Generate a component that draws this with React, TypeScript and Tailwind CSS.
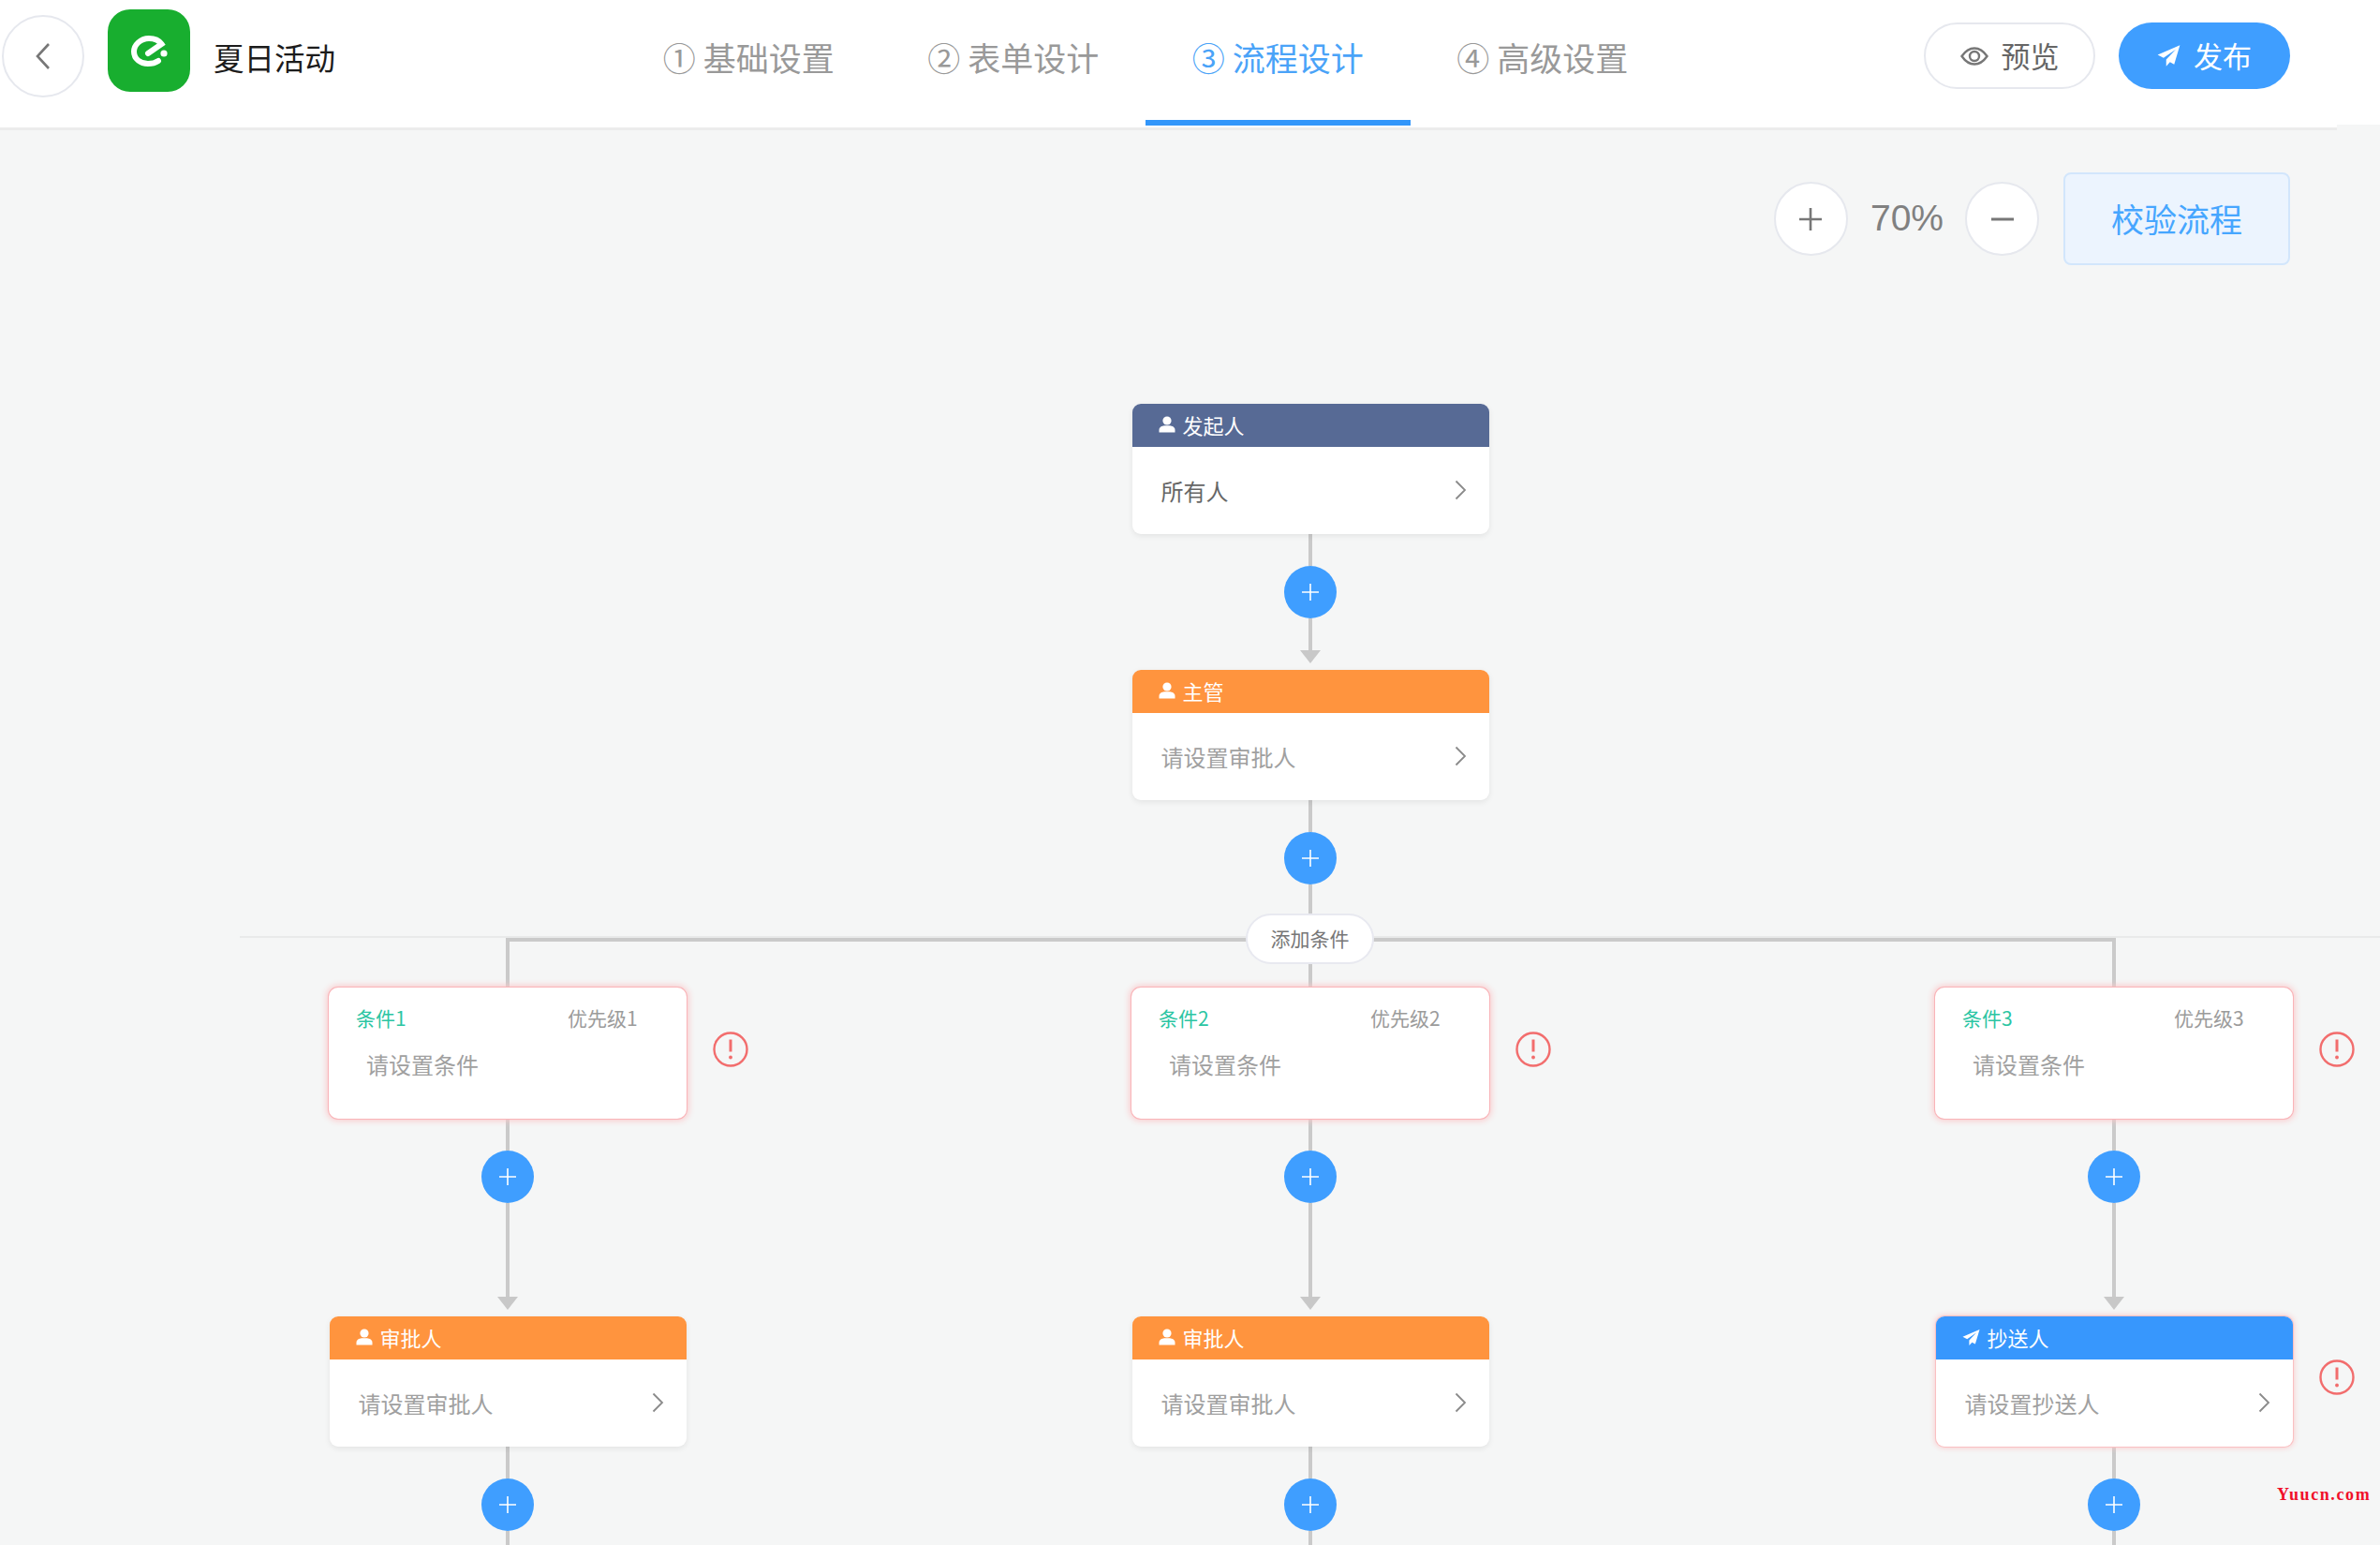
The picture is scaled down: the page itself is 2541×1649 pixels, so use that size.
const font = "font-['Noto_Sans_CJK_SC','Noto_Sans',sans-serif]";

function Line({ h }: { h: number | string }) {
  return <div className="w-[4px] shrink-0 bg-[#cacaca]" style={{ height: h }} />;
}

function Plus() {
  return (
    <div className="flex h-[56px] w-[56px] shrink-0 items-center justify-center rounded-full bg-[#3f9eff]">
      <svg width="20" height="20" viewBox="0 0 20 20" stroke="white" strokeWidth="1.6">
        <path d="M10 1v18M1 10h18" />
      </svg>
    </div>
  );
}

function Arrow() {
  return (
    <svg width="22" height="14" viewBox="0 0 22 14" className="shrink-0 fill-[#c8c8c8]">
      <path d="M0 0h22L11 14z" />
    </svg>
  );
}

function Warn({ top }: { top: string }) {
  return (
    <svg viewBox="0 0 38 38" className={`absolute left-full ml-[28px] h-[38px] w-[38px] ${top}`} fill="none" stroke="#f26d6d" strokeWidth="2.4">
      <circle cx="19" cy="19" r="17.5" />
      <path d="M19 8.5v13" strokeWidth="3" />
      <circle cx="19" cy="27.5" r="1.9" fill="#f26d6d" stroke="none" />
    </svg>
  );
}

function Person() {
  return (
    <svg width="18" height="18" viewBox="0 0 18 18" fill="white" className="shrink-0">
      <circle cx="9" cy="5" r="4.6" />
      <path d="M0.5 17.5v-2.6c0-3 3-4.4 5.5-4.6h6c2.5.2 5.5 1.6 5.5 4.6v2.6z" />
    </svg>
  );
}

function Plane({ size, color }: { size: number; color: string }) {
  return (
    <svg width={size} height={size} viewBox="0 0 20 20" fill={color} className="shrink-0">
      <path d="M19.5 1 0.5 9.2l5 2.6L16 4.6 7.8 13.2v5.8l3.2-3.6 3.6 2z" />
    </svg>
  );
}

function Chevron() {
  return (
    <svg width="13" height="22" viewBox="0 0 13 22" fill="none" stroke="#8a8a8a" strokeWidth="1.8" className="absolute right-[24px] top-[81px]">
      <path d="M1.5 1.5 11 11 1.5 20.5" />
    </svg>
  );
}

function NodeCard({ title, text, color, dark, cc }: { title: string; text: string; color: string; dark?: boolean; cc?: boolean }) {
  return (
    <div className={`relative h-[139px] w-[381px] shrink-0 rounded-[9px] bg-white ${cc ? "shadow-[0_0_0_1px_#fac0c2,0_0_6px_1px_#fbc4c6]" : "shadow-[0_2px_6px_rgba(0,0,0,0.08)]"}`}>
      <div className={`flex h-[46px] items-center gap-[8px] rounded-t-[9px] pb-[2px] pl-[28px] text-[22px] text-white ${color}`}>
        {cc ? <Plane size={19} color="white" /> : <Person />}
        <span>{title}</span>
      </div>
      <div className={`pl-[31px] pt-[29px] text-[24px] leading-[36px] ${dark ? "text-[#666]" : "text-[#a0a0a0]"}`}>{text}</div>
      <Chevron />
      {cc && <Warn top="top-[46px]" />}
    </div>
  );
}

function ConditionCard({ n }: { n: number }) {
  return (
    <div className="relative h-[140px] w-[382px] shrink-0 rounded-[10px] bg-white px-[29px] pt-[16px] shadow-[0_0_0_1px_#f9b4b8,0_0_7px_2px_#fbc6c8]">
      <div className="flex h-[34px] items-center text-[21px]">
        <span className="w-[226px] text-[#2cc5a3]">条件{n}</span>
        <span className="text-[#9b9b9b]">优先级{n}</span>
      </div>
      <div className="pl-[11px] pt-[14px] text-[24px] leading-[36px] text-[#a0a0a0]">请设置条件</div>
      <Warn top="top-[47px]" />
    </div>
  );
}

function Branch({ n, title, text, color, cc }: { n: number; title: string; text: string; color: string; cc?: boolean }) {
  return (
    <div className="flex flex-col items-center">
      <Line h={53} />
      <ConditionCard n={n} />
      <Line h={34} />
      <Plus />
      <Line h={100} />
      <Arrow />
      <div className="h-[7px] shrink-0" />
      <NodeCard title={title} text={text} color={color} cc={cc} />
      <Line h={34} />
      <Plus />
      <Line h={20} />
    </div>
  );
}

const tabs = ["基础设置", "表单设计", "流程设计", "高级设置"];
const marks = ["①", "②", "③", "④"];

export default function App() {
  return (
    <div className={`h-[1649px] w-[2541px] overflow-hidden bg-[#f5f6f6] ${font}`}>
      <header className="relative flex h-[139px] items-start border-b-[3px] border-[#ececec] bg-white">
        <button className="ml-[2px] mt-[16px] flex h-[88px] w-[88px] shrink-0 items-center justify-center rounded-full border-2 border-[#e6e8ee]">
          <svg width="20" height="30" viewBox="0 0 20 30" fill="none" stroke="#777" strokeWidth="2.6">
            <path d="M16 2 4 15l12 13" />
          </svg>
        </button>
        <div className="ml-[25px] mt-[10px] flex h-[88px] w-[88px] shrink-0 items-center justify-center rounded-[24px] bg-[#18ae2f]">
          <svg width="88" height="88" viewBox="0 0 88 88" fill="none" stroke="white" strokeWidth="6" strokeLinecap="round">
            <path d="M43 47 57.5 37C54 32 49 31 44 31 35 31 28 38 28 45c0 8 7 13 15 13 4 0 8-1 11-3" />
            <circle cx="60" cy="47" r="3.6" fill="white" stroke="none" />
          </svg>
        </div>
        <div className="ml-[25px] mt-[38px] text-[32.5px] leading-[46px] text-[#1c1c1c]">夏日活动</div>
        <nav className="ml-[300px] grid h-[136px] w-[1130px] grid-cols-4">
          {tabs.map((t, i) => (
            <div key={t} className={`flex h-[134px] items-start justify-center pt-[36px] text-[35px] leading-[50px] ${i === 2 ? "border-b-[6px] border-[#3296fa] text-[#4aa3f8]" : "text-[#999]"}`}>
              <span className="mr-[8px]">{marks[i]}</span>
              {t}
            </div>
          ))}
        </nav>
        <div className="ml-[266px] mt-[24px] flex h-[71px] w-[183px] items-center justify-center gap-[14px] rounded-full border-2 border-[#e6e8ee] text-[31px] text-[#666]">
          <svg width="30" height="20" viewBox="0 0 30 20" fill="none" stroke="#777" strokeWidth="2.4">
            <path d="M1.5 10C6 3.5 10 1.5 15 1.5S24 3.500 28.500 10C24 16.500 20 18.500 15 18.500S6 16.500 1.500 10z" />
            <circle cx="15" cy="10" r="5" />
          </svg>
          预览
        </div>
        <div className="ml-[25px] mt-[24px] flex h-[71px] w-[183px] items-center justify-center gap-[14px] rounded-full bg-[#3f9eff] text-[31px] text-white">
          <Plane size={25} color="white" />
          发布
        </div>
        <div className="absolute bottom-[-3px] right-0 h-[6px] w-[46px] bg-[#f5f6f6]" />
      </header>

      <div className="mt-[45px] flex h-[99px] items-center justify-end pr-[96px]">
        <div className="flex h-[79px] w-[79px] items-center justify-center rounded-full border-2 border-[#e6e8ee] bg-white">
          <svg width="24" height="26" viewBox="0 0 24 26" stroke="#777" strokeWidth="2.6"><path d="M12 1v24M0 13h24" /></svg>
        </div>
        <span className="-mt-[1px] ml-[24px] mr-[23px] font-['Liberation_Sans',sans-serif] text-[39px] text-[#808080]">70%</span>
        <div className="flex h-[79px] w-[79px] items-center justify-center rounded-full border-2 border-[#e6e8ee] bg-white">
          <svg width="24" height="4" viewBox="0 0 24 4" stroke="#777" strokeWidth="3"><path d="M0 2h24" /></svg>
        </div>
        <div className="ml-[26px] flex h-[99px] w-[242px] items-center justify-center rounded-[8px] border-2 border-[#d2e6fc] bg-[#ecf4fe] text-[35px] text-[#46a6ff]">校验流程</div>
      </div>

      <div className="mt-[148px] pl-[114px]">
        <div className="ml-[856px] flex w-[858px] flex-col items-center">
          <NodeCard title="发起人" text="所有人" color="bg-[#576a95]" dark />
          <Line h={34} />
          <Plus />
          <Line h={34} />
          <Arrow />
          <div className="h-[7px]" />
          <NodeCard title="主管" text="请设置审批人" color="bg-[#ff943e]" />
          <Line h={34} />
          <Plus />
          <Line h={57} />
        </div>
        <div className="relative grid w-[2572px] grid-cols-[856px_858px_858px]">
          <div className="absolute left-[142px] right-[-60px] top-[-2px] h-[2px] bg-[#e9eaea]" />
          <div className="absolute left-[426px] top-0 h-[4px] w-[1719px] bg-[#cacaca]" />
          <Branch n={1} title="审批人" text="请设置审批人" color="bg-[#ff943e]" />
          <div className="relative">
            <Branch n={2} title="审批人" text="请设置审批人" color="bg-[#ff943e]" />
            <div className="absolute left-[360px] top-[-26px] flex h-[54px] w-[137px] items-center justify-center rounded-full border-2 border-[#e8e9f0] bg-white text-[21px] text-[#777]">添加条件</div>
          </div>
          <Branch n={3} title="抄送人" text="请设置抄送人" color="bg-[#3797fd]" cc />
        </div>
      </div>
      <div className="absolute left-[2431px] top-[1583px] font-['Liberation_Serif',serif] text-[18px] font-bold leading-[24px] tracking-[1.6px] text-[#f0102a]">Yuucn.com</div>
    </div>
  );
}
